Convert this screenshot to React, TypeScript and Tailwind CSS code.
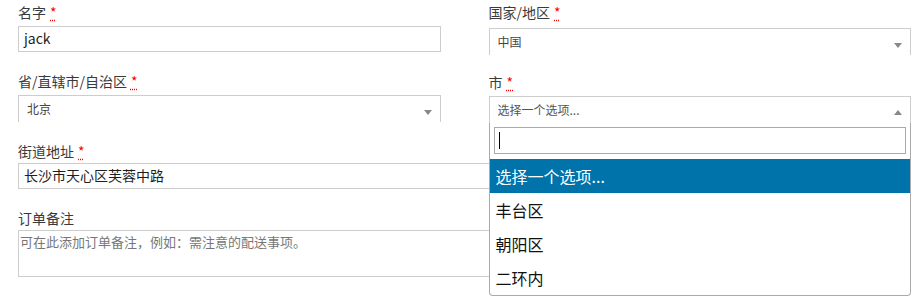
import React from "react";

const FONT = { fontFamily: '"Noto Sans CJK SC", "Open Sans", sans-serif' };

function Req() {
  return (
    <abbr title="required" className="ml-[4px] text-[#ff0000] [text-decoration:underline_dotted] [text-underline-offset:2px]">
      *
    </abbr>
  );
}

function Label({ children, req = true, extra = "" }: { children: React.ReactNode; req?: boolean; extra?: string }) {
  return (
    <div className={`h-[20px] leading-[20px] text-[14px] text-[#3a3a3a] whitespace-nowrap ${extra}`}>
      {children}
      {req && <Req />}
    </div>
  );
}

function ArrowDown() {
  return (
    <span className="absolute right-[8px] top-[14px] h-0 w-0 border-x-[4px] border-t-[5px] border-x-transparent border-t-[#888]" />
  );
}

function ArrowUp() {
  return (
    <span className="absolute right-[8px] top-[13px] h-0 w-0 border-x-[4px] border-b-[5px] border-x-transparent border-b-[#888]" />
  );
}

export default function App() {
  return (
    <div className="w-[921px] h-[305px] bg-white overflow-hidden" style={FONT}>
      <div className="ml-[18px] w-[893px] pt-[2px]">
        {/* Row 1 */}
        <div className="grid grid-cols-2 gap-x-[48px] items-start">
          <div>
            <Label>名字</Label>
            <div className="mt-[4px] h-[26px] border border-[#cdcdcd] pl-[5px] text-[14px] leading-[22px] text-[#1e1e1e]">
              jack
            </div>
          </div>
          <div>
            <Label>国家/地区</Label>
            <div className="relative mt-[6px] h-[27px] border-x border-t border-[#cdcdcd] pl-[8px] pt-[3px] text-[12px] leading-[20px] text-[#444]">
              中国
              <ArrowDown />
            </div>
          </div>
        </div>

        {/* Row 2 */}
        <div className="mt-[16px] grid grid-cols-2 gap-x-[48px] items-start">
          <div>
            <Label>省/直辖市/自治区</Label>
            <div className="relative mt-[4px] h-[27px] border-x border-t border-[#cdcdcd] pl-[8px] pt-[3px] text-[12px] leading-[20px] text-[#444]">
              北京
              <ArrowDown />
            </div>
          </div>
          <div className="relative z-10">
            <Label extra="mt-[1px]">市</Label>
            <div className="relative mt-[4px]">
              <div className="relative h-[27px] border-x border-t border-[#cdcdcd] pl-[8px] pt-[3px] text-[12px] leading-[20px] text-[#555]">
                选择一个选项...
                <ArrowUp />
              </div>
              <div className="absolute left-0 right-0 top-full rounded-b-[4px] border border-t-0 border-[#aaa] bg-white">
                <div className="px-[4px] pt-[4px] pb-[5px]">
                  <div className="flex h-[27px] items-center border border-[#aaa] pl-[4px]">
                    <span className="h-[17px] w-px bg-black" />
                  </div>
                </div>
                <div className="text-[16px] leading-[34px]">
                  <div className="h-[34px] bg-[#0073aa] pl-[6px] text-white">选择一个选项...</div>
                  <div className="h-[34px] pl-[6px] text-[#111]">丰台区</div>
                  <div className="h-[34px] pl-[6px] text-[#111]">朝阳区</div>
                  <div className="h-[34px] pl-[6px] text-[#111]">二环内</div>
                </div>
              </div>
            </div>
          </div>
        </div>

        {/* Row 3 */}
        <div className="mt-[18px]">
          <Label>街道地址</Label>
          <div className="mt-[2px] h-[26px] border border-[#cdcdcd] pl-[5px] text-[14px] leading-[23px] text-[#1e1e1e]">
            长沙市天心区芙蓉中路
          </div>
        </div>

        {/* Row 4 */}
        <div className="mt-[19px]">
          <Label req={false}>订单备注</Label>
          <div className="mt-[2px] h-[47px] border border-[#cdcdcd] pl-[1px] pt-[1px] text-[13px] leading-[20px] text-[#777]">
            可在此添加订单备注，例如：需注意的配送事项。
          </div>
        </div>
      </div>
    </div>
  );
}
